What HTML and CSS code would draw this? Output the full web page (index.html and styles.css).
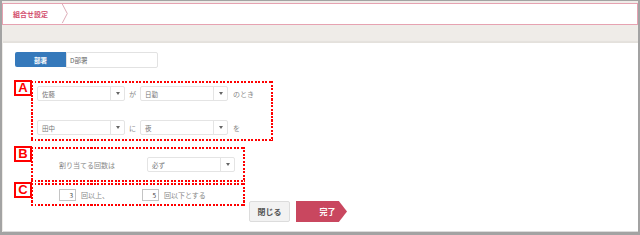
FILE: index.html
```html
<!DOCTYPE html>
<html lang="ja">
<head>
<meta charset="utf-8">
<title>組合せ設定</title>
<link rel="stylesheet" href="styles.css">
</head>
<body>
<div class="frame">
  <header class="head">
    <span class="title">組合せ設定</span>
    <svg class="chev" width="8" height="22" viewBox="0 0 8 22"><polyline points="1,0 6.5,10.5 1,21" fill="none" stroke="#d9a3b0" stroke-width="1"/></svg>
  </header>
  <div class="band"></div>
  <main class="panel">
    <div class="dept">
      <span class="dept-label">部署</span>
      <span class="dept-field">D部署</span>
    </div>

    <section class="box box-a">
      <span class="tag">A</span>
      <div class="row">
        <div class="sel"><span class="sel-text">佐藤</span><span class="sel-arrow"></span></div>
        <span class="joint">が</span>
        <div class="sel"><span class="sel-text">日勤</span><span class="sel-arrow"></span></div>
        <span class="tail">のとき</span>
      </div>
      <div class="row row-2">
        <div class="sel"><span class="sel-text">田中</span><span class="sel-arrow"></span></div>
        <span class="joint">に</span>
        <div class="sel"><span class="sel-text">夜</span><span class="sel-arrow"></span></div>
        <span class="tail">を</span>
      </div>
    </section>

    <section class="box box-b">
      <span class="tag">B</span>
      <div class="row">
        <span class="count-label">割り当てる回数は</span>
        <div class="sel"><span class="sel-text">必ず</span><span class="sel-arrow"></span></div>
      </div>
    </section>

    <div class="bottom-row">
      <section class="box box-c">
        <span class="tag">C</span>
        <div class="row">
          <span class="num">3</span>
          <span class="unit unit-1">回以上、</span>
          <span class="num">5</span>
          <span class="unit">回以下とする</span>
        </div>
      </section>
      <div class="actions">
        <button class="btn btn-close">閉じる</button>
        <button class="btn btn-done">完了</button>
      </div>
    </div>
  </main>
</div>
</body>
</html>
```

FILE: styles.css
```css
* { box-sizing: border-box; }
html, body { margin: 0; padding: 0; }
body {
  font-family: "Noto Sans CJK JP", "Noto Sans", sans-serif;
  color: #888;
  background: #fff;
}
.frame {
  width: 640px;
  height: 235px;
  background: #efece8;
  border-style: solid;
  border-color: #a3a3a3;
  border-width: 1px 2px 3px 2px;
  display: flex;
  flex-direction: column;
}
.head {
  margin-top: 2px;
  height: 22px;
  background: #fff;
  border: 1px solid #e6a2b1;
  display: flex;
  align-items: center;
  padding-left: 10px;
}
.title {
  font-size: 7px;
  font-weight: 700;
  color: #d24d6c;
  line-height: 1;
}
.chev { margin-left: 13px; display: block; align-self: stretch; height: 20px; }
.band { height: 17px; }
.panel {
  margin-left: 1px;
  height: 190px;
  background: #fff;
  border-top: 1px solid #e4e1dc;
  border-bottom: 1px solid #dcdcdc;
  padding: 9px 0 0 12px;
  box-shadow: 0 -1px 1px rgba(0,0,0,0.04);
}
.dept { display: flex; height: 16px; }
.dept-label {
  width: 51px;
  height: 15px;
  background: #3579bb;
  color: #fff;
  font-size: 6.5px;
  font-weight: 700;
  display: flex;
  align-items: center;
  justify-content: center;
  border-radius: 2px 0 0 2px;
}
.dept-field {
  width: 92px;
  height: 16px;
  border: 1px solid #e2e2e2;
  border-radius: 0 2px 2px 0;
  font-size: 6.5px;
  color: #666;
  display: flex;
  align-items: center;
  padding-left: 3px;
}
.box {
  position: relative;
  margin-left: 16px;
  background:
    repeating-linear-gradient(90deg, #ff0000 0 2px, transparent 2px 3.5px) left top / 100% 2px no-repeat,
    repeating-linear-gradient(90deg, #ff0000 0 2px, transparent 2px 3.5px) left bottom / 100% 2px no-repeat,
    repeating-linear-gradient(180deg, #ff0000 0 2px, transparent 2px 3.5px) left top / 2px 100% no-repeat,
    repeating-linear-gradient(180deg, #ff0000 0 2px, transparent 2px 3.5px) right top / 2px 100% no-repeat;
}
.tag {
  position: absolute;
  left: -17px;
  top: -1px;
  width: 18px;
  height: 16px;
  background: #fff;
  border: 2px solid #f00;
  color: #f00;
  font-family: "Liberation Sans", Arial, sans-serif;
  font-weight: 700;
  font-size: 13px;
  line-height: 12px;
  text-align: center;
}
.box-a {
  margin-top: 13px;
  width: 242px;
  height: 60px;
  padding: 5px 0 0 6px;
}
.row { display: flex; align-items: center; height: 15px; }
.row-2 { margin-top: 19px; }
.sel {
  width: 88px;
  height: 15px;
  border: 1px solid #e4e4e4;
  border-radius: 2px;
  display: flex;
  align-items: stretch;
  background: #fff;
}
.sel-text {
  flex: 1;
  font-size: 6.5px;
  color: #777;
  display: flex;
  align-items: center;
  padding-left: 4px;
}
.sel-arrow {
  width: 14px;
  border-left: 1px solid #e4e4e4;
  position: relative;
}
.sel-arrow::after {
  content: "";
  position: absolute;
  left: 5px;
  top: 5px;
  border-left: 2px solid transparent;
  border-right: 2px solid transparent;
  border-top: 3px solid #666;
}
.joint {
  width: 15px;
  text-align: center;
  font-size: 7px;
  color: #888;
}
.tail { margin-left: 5px; font-size: 7px; color: #888; }
.box-b {
  margin-top: 6px;
  width: 214px;
  height: 35px;
  padding: 10px 0 0 28px;
}
.count-label { width: 88px; font-size: 7px; color: #888; }
.bottom-row { display: flex; align-items: flex-start; }
.box-c {
  margin-top: 1px;
  width: 214px;
  height: 23px;
  padding: 6px 0 0 28px;
}
.box-c .row { height: 12px; }
.num {
  width: 17px;
  height: 12px;
  border: 1px solid #c4c4c4;
  font-size: 6.5px;
  color: #444;
  text-align: right;
  padding-right: 2px;
  line-height: 10px;
}
.unit { margin-left: 5px; font-size: 7px; color: #888; }
.unit-1 { width: 61px; }
.actions {
  display: flex;
  margin-left: 4px;
  margin-top: 19px;
  gap: 6px;
}
.btn {
  height: 21px;
  padding: 0;
  font-family: "Noto Sans CJK JP", "Noto Sans", sans-serif;
  font-size: 8px;
  font-weight: 700;
  cursor: pointer;
}
.btn-close {
  width: 41px;
  background: #f2f2f2;
  border: 1px solid #dcdcdc;
  border-radius: 2px;
  color: #555;
}
.btn-done {
  width: 51px;
  background: #c9475f;
  border: none;
  color: #fff;
  padding-left: 12px;
  clip-path: polygon(0 0, 84% 0, 100% 50%, 84% 100%, 0 100%);
}
```
